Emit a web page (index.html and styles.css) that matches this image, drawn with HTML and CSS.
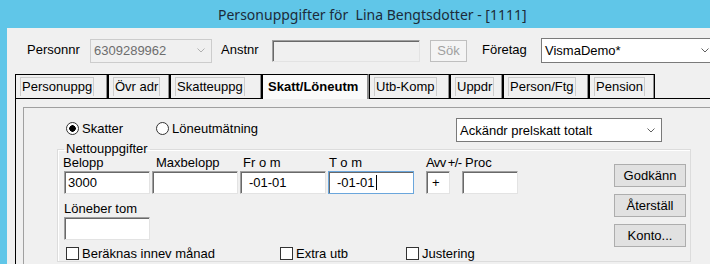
FILE: index.html
```html
<!DOCTYPE html>
<html lang="sv">
<head>
    <meta charset="UTF-8">
    <meta name="viewport" content="width=device-width, initial-scale=1.0">
    <title>Personuppgifter</title>
    <link rel="stylesheet" href="styles.css">
</head>
<body>
    <div class="titlebar">
        <span class="title">Personuppgifter för&nbsp; Lina Bengtsdotter - [1111]</span>
    </div>

    <div class="client">
        <!-- Person / company selection -->
        <div class="toprow">
            <label class="lbl lbl-personnr">Personnr</label>
            <div class="combo combo-disabled combo-personnr">
                <span>6309289962</span>
                <svg class="chev" width="8" height="5" viewBox="0 0 8 5"><polyline points="0.5,0.5 4,4 7.5,0.5" fill="none" stroke="#b0b0b0" stroke-width="1"/></svg>
            </div>
            <label class="lbl lbl-anstnr">Anstnr</label>
            <div class="input input-disabled input-anstnr"></div>
            <button class="btn btn-disabled btn-sok">Sök</button>
            <label class="lbl lbl-foretag">Företag</label>
            <div class="combo combo-foretag">
                <span>VismaDemo*</span>
                <svg class="chev" width="8" height="5" viewBox="0 0 8 5"><polyline points="0.5,0.5 4,4 7.5,0.5" fill="none" stroke="#606060" stroke-width="1"/></svg>
            </div>
        </div>

        <!-- Tabs -->
        <div class="tabs">
            <div class="tab tab-personuppg"><span class="tab-label">Personuppg</span></div>
            <div class="tab tab-ovradr"><span class="tab-label">Övr adr</span></div>
            <div class="tab tab-skatteuppg"><span class="tab-label">Skatteuppg</span></div>
            <div class="tab tab-active tab-skatt"><span class="tab-label">Skatt/Löneutm</span></div>
            <div class="tab tab-utbkomp"><span class="tab-label">Utb-Komp</span></div>
            <div class="tab tab-uppdr"><span class="tab-label">Uppdr</span></div>
            <div class="tab tab-personftg"><span class="tab-label">Person/Ftg</span></div>
            <div class="tab tab-pension"><span class="tab-label">Pension</span></div>
        </div>

        <div class="panel">
            <div class="frame">
                <div class="mode-row">
                    <div class="radio-item radio-skatter"><span class="radio radio-checked"></span>Skatter</div>
                    <div class="radio-item"><span class="radio"></span>Löneutmätning</div>
                    <div class="combo combo-typ">
                        <span>Ackändr prelskatt totalt</span>
                        <svg class="chev" width="8" height="5" viewBox="0 0 8 5"><polyline points="0.5,0.5 4,4 7.5,0.5" fill="none" stroke="#606060" stroke-width="1"/></svg>
                    </div>
                </div>

                <fieldset class="group">
                    <legend>Nettouppgifter</legend>
                    <div class="group-body">
                        <div class="fields">
                            <div class="frow">
                                <div class="fcol col-belopp">
                                    <label>Belopp</label>
                                    <div class="input input-wide">3000</div>
                                </div>
                                <div class="fcol col-max">
                                    <label>Maxbelopp</label>
                                    <div class="input input-wide"></div>
                                </div>
                                <div class="fcol col-from">
                                    <label>Fr o m</label>
                                    <div class="input input-wide input-date">-01-01</div>
                                </div>
                                <div class="fcol col-tom">
                                    <label>T o m</label>
                                    <div class="input input-wide input-date input-focus">-01-01<span class="caret"></span></div>
                                </div>
                                <div class="fcol col-avv">
                                    <label>Avv +/-</label>
                                    <div class="input input-avv">+</div>
                                </div>
                                <div class="fcol col-proc">
                                    <label>Proc</label>
                                    <div class="input input-proc"></div>
                                </div>
                            </div>

                            <div class="fcol col-loneber">
                                <label>Löneber tom</label>
                                <div class="input input-wide"></div>
                            </div>

                            <div class="check-row">
                                <div class="check-item check-beraknas"><span class="checkbox"></span>Beräknas innev månad</div>
                                <div class="check-item check-extra"><span class="checkbox"></span>Extra utb</div>
                                <div class="check-item"><span class="checkbox"></span>Justering</div>
                            </div>
                        </div>

                        <div class="actions">
                            <button class="btn">Godkänn</button>
                            <button class="btn">Återställ</button>
                            <button class="btn">Konto...</button>
                        </div>
                    </div>
                </fieldset>
            </div>
        </div>
    </div>
</body>
</html>
```

FILE: styles.css
```css
body {
    margin: 0;
    background-color: #60c6e8;
    font-family: "Liberation Sans", Arial, sans-serif;
    font-size: 13px;
    color: #000;
    overflow: hidden;
}

.titlebar {
    height: 28px;
    display: flex;
    align-items: center;
    padding-left: 218px;
    color: #1c2b3a;
    font-family: "Noto Sans", sans-serif;
    font-size: 14px;
}

.client {
    margin-left: 7px;
    height: 236px;
    background-color: #f0f0f0;
    overflow: hidden;
}

/* top row */
.toprow {
    display: flex;
    align-items: center;
    height: 25px;
    padding: 10px 0 0 20px;
}

.toprow > * {
    flex-shrink: 0;
}

.lbl {
    padding-bottom: 3px;
}

.lbl-personnr { width: 63px; }
.lbl-anstnr { width: 51px; margin-left: 9px; }
.lbl-foretag { width: 59px; margin-left: 15px; }

.combo {
    box-sizing: border-box;
    display: flex;
    align-items: center;
    justify-content: space-between;
    padding: 0 6px 0 3px;
    background-color: #fff;
    border: 1px solid #7a7a7a;
}

.combo-disabled {
    background-color: #f0f0f0;
    border-color: #cccccc;
    color: #6d6d6d;
}

.combo-personnr { width: 122px; height: 24px; }
.combo-foretag { width: 175px; height: 25px; }

.input {
    box-sizing: border-box;
    height: 23px;
    background-color: #fff;
    border: 1px solid #a0a0a0;
    border-right-color: #e3e3e3;
    border-bottom-color: #e3e3e3;
    box-shadow: inset 1px 1px 0 #696969;
    padding: 3px 0 0 3px;
    line-height: 16px;
    display: flex;
    align-items: flex-start;
}

.input-disabled {
    background-color: #f0f0f0;
}

.input-anstnr { width: 148px; height: 22px; }

.btn {
    box-sizing: border-box;
    width: 72px;
    height: 23px;
    padding: 0;
    background-color: #e1e1e1;
    border: 1px solid #adadad;
    font-family: "Liberation Sans", Arial, sans-serif;
    font-size: 13px;
    color: #000;
}

.btn-disabled {
    background-color: #f4f4f4;
    border-color: #bfbfbf;
    color: #a0a0a0;
}

.btn-sok {
    width: 37px;
    height: 22px;
    margin-left: 10px;
}

/* tabs */
.tabs {
    display: flex;
    align-items: flex-start;
    height: 24px;
    margin: 11px 0 0 8px;
}

.tab {
    box-sizing: border-box;
    height: 24px;
    background-color: #f0f0f0;
    border: 1px solid #000;
    border-bottom: none;
    box-shadow: inset -1px 0 0 #909090;
}

.tab-label {
    display: inline-block;
    margin: 2px 0 0 4px;
    padding: 0 1px;
    line-height: 18px;
    border: 1px solid #cdcdcd;
    border-bottom: none;
}

.tab-active {
    position: relative;
    height: 25px;
    background-color: #fafafa;
    border-right-color: #909090;
    border-right-width: 2px;
    box-shadow: none;
}

.tab-active .tab-label {
    border: none;
    margin: 3px 0 0 4px;
    font-weight: bold;
}

.tab-personuppg { width: 93px; }
.tab-ovradr { width: 62px; }
.tab-skatteuppg { width: 92px; }
.tab-skatt { width: 107px; }
.tab-utbkomp { width: 81px; }
.tab-uppdr { width: 53px; }
.tab-personftg { width: 86px; }
.tab-pension { width: 66px; }

.panel {
    margin-left: 8px;
    height: 200px;
    border-left: 1px solid #000;
    border-top: 1px solid #000;
}

.frame {
    margin: 8px 0 0 7px;
    height: 200px;
    border-left: 1px solid #a0a0a0;
    border-top: 1px solid #a0a0a0;
}

/* radio row */
.mode-row {
    display: flex;
    align-items: center;
    height: 24px;
    margin-top: 10px;
    padding-left: 42px;
}

.radio-item,
.check-item {
    display: flex;
    align-items: center;
    gap: 3px;
}

.radio-item {
    margin-top: -3px;
}

.radio-skatter { width: 90px; }

.radio {
    box-sizing: border-box;
    width: 13px;
    height: 13px;
    border: 1px solid #333;
    border-radius: 50%;
    background-color: #fff;
}

.radio-checked {
    background: radial-gradient(circle, #000 0, #000 3px, #fff 3.5px);
}

.combo-typ {
    width: 206px;
    height: 24px;
    margin-left: auto;
    margin-right: 48px;
}

/* group box */
.group {
    margin: -1px 19px 0 33px;
    padding: 0;
    min-width: 0;
    border: 1px solid #dcdcdc;
    box-shadow: inset 1px 1px 0 #fff;
}

.group legend {
    margin-left: 6px;
    padding: 0 2px;
    line-height: 16px;
}

.group-body {
    display: flex;
    margin-top: -2px;
}

.fields {
    margin-left: 6px;
}

.frow {
    display: flex;
}

.fcol {
    display: flex;
    flex-direction: column;
}

.fcol label {
    line-height: 16px;
    white-space: nowrap;
}

.input-wide { width: 86px; }
.input-avv { width: 24px; padding-left: 5px; }
.input-proc { width: 56px; }
.input-date { padding-left: 8px; }

.input-focus {
    border-color: #6aa6dc;
}

.caret {
    display: inline-block;
    width: 1px;
    height: 15px;
    background-color: #000;
    margin-left: 1px;
}

.col-belopp label { margin-left: -1px; }
.col-max { margin-left: 2px; }
.col-max label { padding-left: 4px; }
.col-from { margin-left: 2px; }
.col-from label { padding-left: 3px; }
.col-tom { margin-left: 2px; }
.col-tom label { padding-left: 1px; }
.col-avv { margin-left: 12px; width: 24px; }
.col-avv label { letter-spacing: -0.6px; word-spacing: -1px; }
.col-proc { margin-left: 12px; }
.col-proc label { padding-left: 3px; }

.col-loneber {
    margin-top: 6px;
}

.col-loneber label {
    line-height: 17px;
}

.check-row {
    display: flex;
    margin-top: 6px;
    margin-left: 2px;
}

.checkbox {
    box-sizing: border-box;
    width: 13px;
    height: 13px;
    border: 1px solid #333;
    background-color: #fff;
}

.check-beraknas { width: 214px; }
.check-extra { width: 126px; }

.actions {
    display: flex;
    flex-direction: column;
    gap: 7px;
    margin: 9px 4px 0 auto;
}
```
